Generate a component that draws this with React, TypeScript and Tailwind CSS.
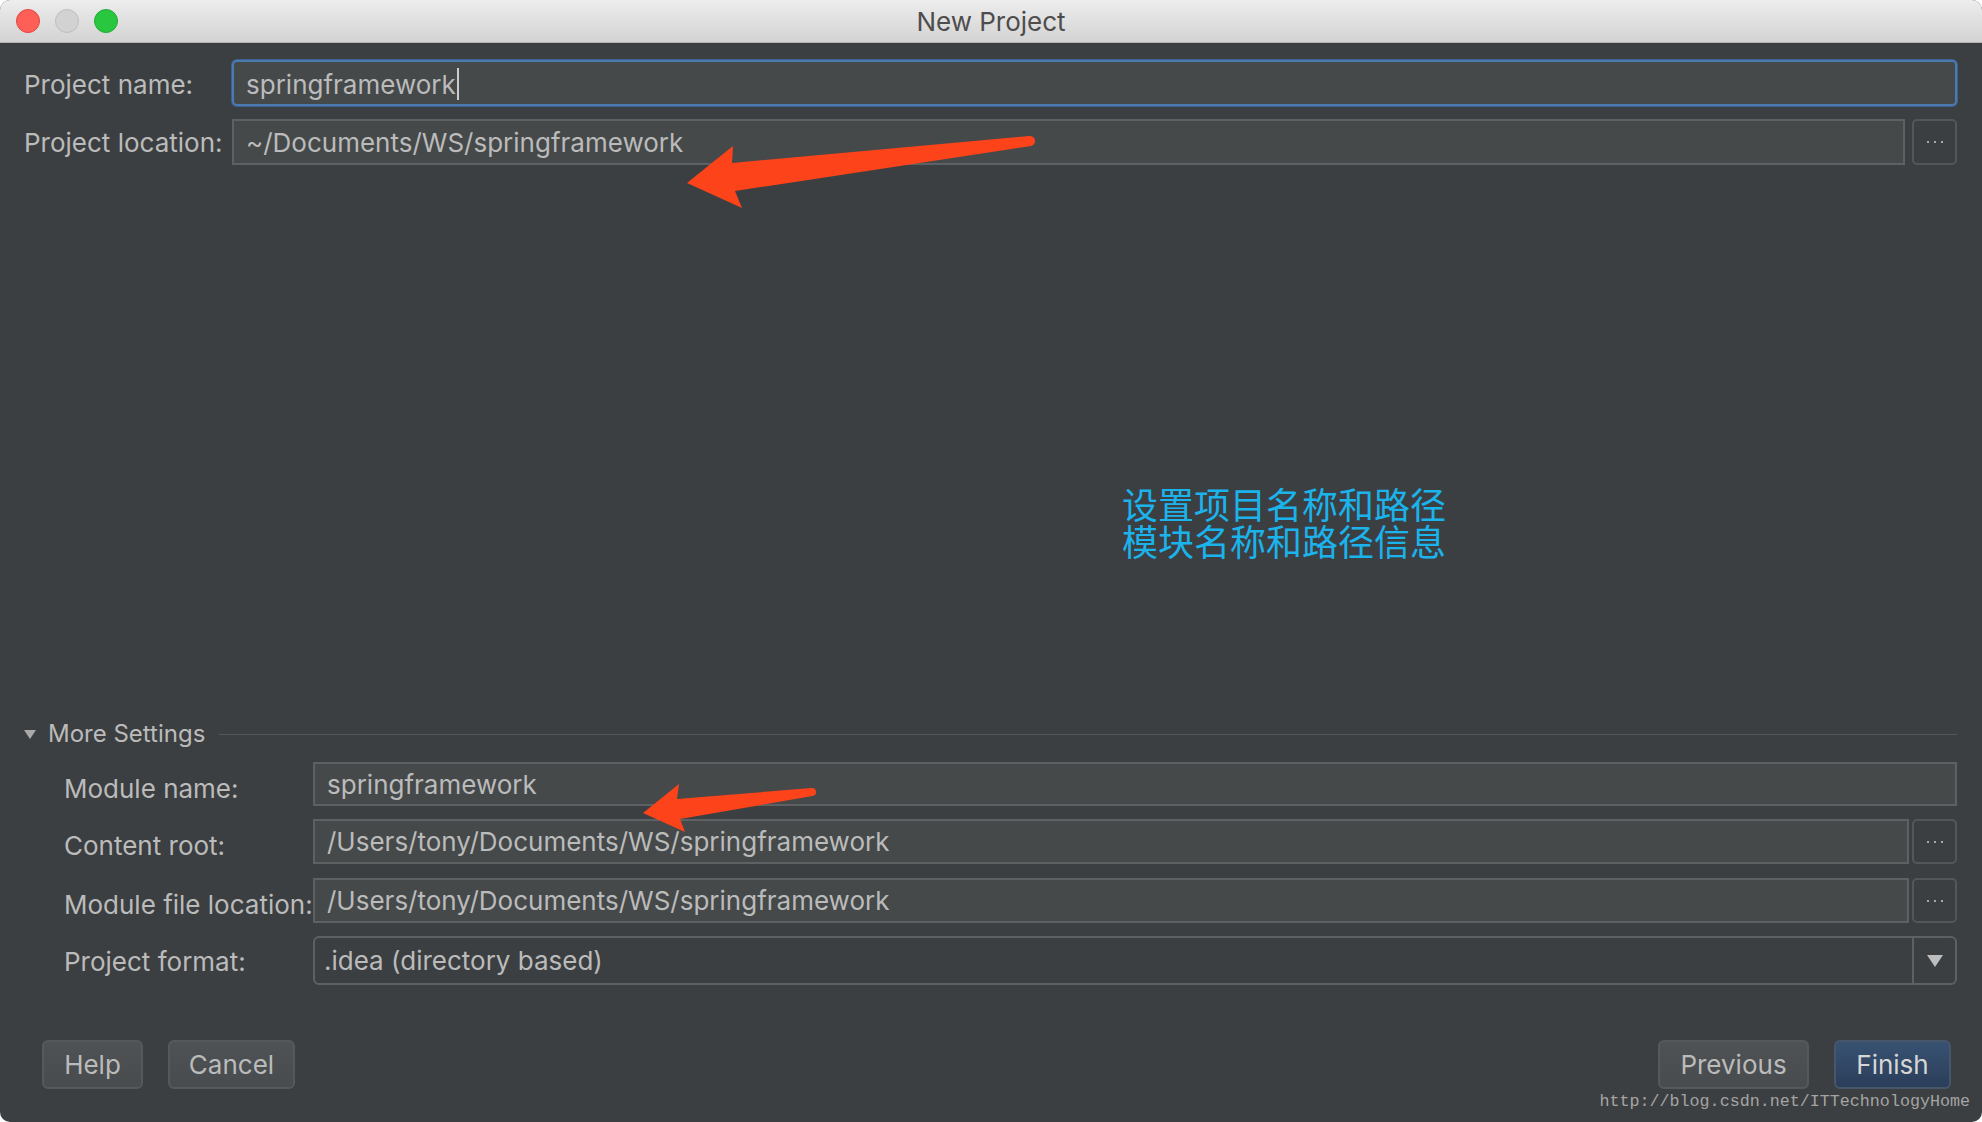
import React from 'react';

const label = 'shrink-0 whitespace-nowrap text-[26px] text-[#bbbbbb]';
const fieldText = 'text-[26px] text-[#bbbbbb] whitespace-nowrap';

function Browse() {
  return (
    <div className="flex h-full w-[45px] shrink-0 items-center justify-center gap-[5px] rounded-[5px] border-2 border-[#545759] bg-[#3c3f41]">
      <span className="h-[2px] w-[2px] bg-[#a9a9a9]" />
      <span className="h-[2px] w-[2px] bg-[#a9a9a9]" />
      <span className="h-[2px] w-[2px] bg-[#a9a9a9]" />
    </div>
  );
}

function TextBox({ value }: { value: string }) {
  return (
    <div className="flex h-full min-w-0 flex-1 items-center border-2 border-[#5e6163] bg-[#45494a] pl-[12px]">
      <span className={fieldText}>{value}</span>
    </div>
  );
}

function Btn({ text, width, primary }: { text: string; width: string; primary?: boolean }) {
  return (
    <div
      className={
        'flex h-full items-center justify-center rounded-[6px] border-2 text-[26px] ' +
        width +
        ' ' +
        (primary
          ? 'border-[#46566b] bg-gradient-to-b from-[#385272] to-[#2b3e5a] text-[#d6d6d6]'
          : 'border-[#56595b] bg-gradient-to-b from-[#4e5254] to-[#484c4e] text-[#bbbbbb]')
      }
    >
      {text}
    </div>
  );
}

export default function App() {
  return (
    <div className="h-[1122px] w-[1982px] bg-white">
      <div className="relative flex h-full flex-col overflow-hidden rounded-[10px] bg-[#3c3f41] font-['Inter','Liberation_Sans',sans-serif]">
        {/* title bar */}
        <div className="grid h-[43px] shrink-0 grid-cols-[1fr_auto_1fr] items-center border-b border-[#b3b3b3] bg-gradient-to-b from-[#ededed] to-[#d3d3d3] px-[16px]">
          <div className="flex gap-[15px]">
            <span className="h-[24px] w-[24px] rounded-full border border-[#e2463f] bg-[#fe5f57]" />
            <span className="h-[24px] w-[24px] rounded-full border border-[#bdbdbd] bg-[#d2d2d2]" />
            <span className="h-[24px] w-[24px] rounded-full border border-[#23a936] bg-[#29c73f]" />
          </div>
          <div className="text-[26px] text-[#4d4d4d]">New Project</div>
          <div />
        </div>

        <div className="flex flex-1 flex-col pl-[24px] pr-[25px]">
          {/* project name */}
          <div className="mt-[17px] flex h-[46px] items-center">
            <div className={label + ' w-[208px] pt-[2px]'}>Project name:</div>
            <div className="flex h-full flex-1 items-center rounded-[5px] border-2 border-[#4a7aaf] bg-[#45494a] pl-[12px] pt-[2px] shadow-[0_0_0_1px_#3d6290]">
              <span className={fieldText}>springframework</span>
              <span className="ml-[1px] h-[32px] w-[2px] bg-[#cccccc]" />
            </div>
          </div>

          {/* project location */}
          <div className="mt-[13px] flex h-[46px] items-center gap-[7px]">
            <div className={label + ' w-[201px]'}>Project location:</div>
            <TextBox value="~/Documents/WS/springframework" />
            <Browse />
          </div>

          {/* annotation */}
          <div className="h-[555px] shrink-0 pl-[1098px] pt-[320px]">
            <div className="font-['Noto_Sans_CJK_SC',sans-serif] text-[36px] leading-[37px] text-[#1ab3ec]">
              <div>设置项目名称和路径</div>
              <div>模块名称和路径信息</div>
            </div>
          </div>

          {/* more settings */}
          <div className="flex h-[28px] items-center">
            <svg width="12" height="9" viewBox="0 0 12 9" className="shrink-0">
              <polygon points="0,0 12,0 6,9" fill="#a9a9a9" />
            </svg>
            <span className="ml-[12px] text-[24px] text-[#bbbbbb]">More Settings</span>
            <div className="ml-[14px] h-[1px] flex-1 bg-[#54575a]" />
          </div>

          <div className="pl-[40px]">
            <div className="mt-[14px] flex h-[44px] items-center">
              <div className={label + ' w-[249px] pt-[8px]'}>Module name:</div>
              <TextBox value="springframework" />
            </div>
            <div className="mt-[13px] flex h-[45px] items-center gap-[3px]">
              <div className={label + ' w-[246px] pt-[8px]'}>Content root:</div>
              <TextBox value="/Users/tony/Documents/WS/springframework" />
              <Browse />
            </div>
            <div className="mt-[14px] flex h-[45px] items-center gap-[3px]">
              <div className={label + ' w-[246px] pt-[8px]'}>Module file location:</div>
              <TextBox value="/Users/tony/Documents/WS/springframework" />
              <Browse />
            </div>
            <div className="mt-[13px] flex h-[49px] items-center">
              <div className={label + ' w-[249px] pt-[2px]'}>Project format:</div>
              <div className="flex h-full flex-1 items-center rounded-[6px] border-2 border-[#5e6163] bg-[#3c3f41]">
                <span className={fieldText + ' flex-1 pl-[9px]'}>.idea (directory based)</span>
                <div className="flex h-full w-[43px] items-center justify-center border-l-2 border-[#5e6163]">
                  <svg width="16" height="12" viewBox="0 0 16 12">
                    <polygon points="0,0 16,0 8,12" fill="#bdbdbd" />
                  </svg>
                </div>
              </div>
            </div>
          </div>

          {/* buttons */}
          <div className="mt-[55px] flex h-[49px] items-center">
            <div className="ml-[18px] h-full">
              <Btn text="Help" width="w-[101px]" />
            </div>
            <div className="ml-[25px] h-full">
              <Btn text="Cancel" width="w-[127px]" />
            </div>
            <div className="flex-1" />
            <div className="h-full">
              <Btn text="Previous" width="w-[151px]" />
            </div>
            <div className="ml-[25px] mr-[6px] h-full">
              <Btn text="Finish" width="w-[117px]" primary />
            </div>
          </div>
        </div>

        {/* red annotation arrows */}
        <svg
          className="pointer-events-none absolute left-0 top-0"
          width="1982"
          height="1122"
          viewBox="0 0 1982 1122"
        >
          <path
            d="M1029 136 L732 163 L733 146 L687 183 L742 208 L735 191 L1031 146 A5 5 0 0 0 1029 136 Z"
            fill="#fd431a"
          />
          <path
            d="M811.5 788 L677 799 L679 784 L643 813 L685 832 L680 819 L812.5 796 A4 4 0 0 0 811.5 788 Z"
            fill="#fd431a"
          />
        </svg>

        {/* watermark */}
        <div className="absolute bottom-[10px] right-[12px] font-['Liberation_Mono',monospace] text-[16.7px] leading-[20px] text-[#a4a4a4]">
          http://blog.csdn.net/ITTechnologyHome
        </div>
      </div>
    </div>
  );
}
